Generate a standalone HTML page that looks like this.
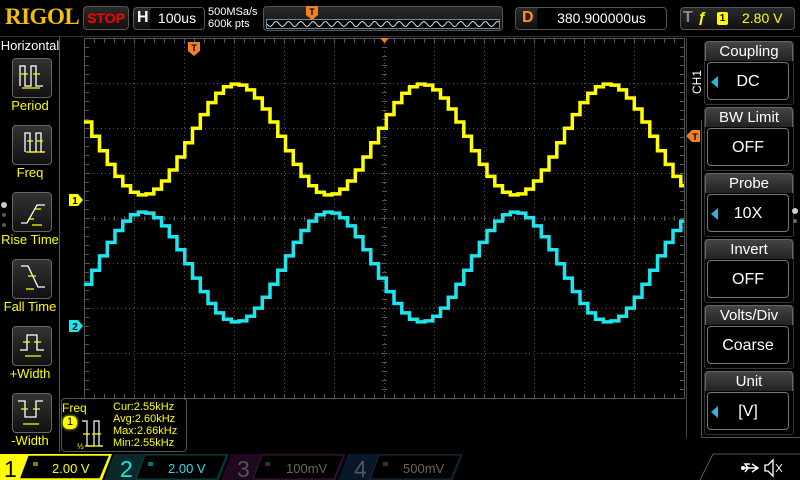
<!DOCTYPE html>
<html><head><meta charset="utf-8">
<style>
*{margin:0;padding:0;box-sizing:border-box}
body{width:800px;height:480px;background:#000;overflow:hidden;position:relative;font-family:"Liberation Sans",sans-serif;color:#fff}
.a{position:absolute}
.box{position:absolute;border:1px solid #555;border-radius:4px;background:linear-gradient(#2a2a2a,#111)}
.ll{position:absolute;left:0;width:60px;text-align:center;color:#ff0;font-size:13px}
.ib{position:absolute;left:12px;width:40px;height:40px;border:1px solid #666;border-radius:4px;background:linear-gradient(#333,#111)}
.mh{position:absolute;left:705px;width:88px;height:20px;border:1px solid #666;border-bottom:none;border-radius:4px 4px 0 0;background:linear-gradient(#444,#222);text-align:center;font-size:15px;line-height:20px}
.mb{position:absolute;left:707px;width:82px;height:38px;border:1px solid #777;border-radius:4px;background:#000;text-align:center;font-size:16px;line-height:38px}
.mw{position:absolute;left:704px;width:90px;height:64px;border:1px solid #333;border-radius:3px}
.tri{position:absolute;left:3px;top:13px;width:0;height:0;border-top:6px solid transparent;border-bottom:6px solid transparent;border-right:7px solid #29b6e0}
</style></head><body>
<!-- top bar -->
<div class="a" style="left:5px;top:4px;font-family:'Liberation Serif',serif;font-weight:bold;font-size:23px;color:#f2c200;letter-spacing:-0.5px">RIGOL</div>
<div class="box" style="left:83px;top:6px;width:46px;height:24px;color:#f00;font-weight:bold;font-size:14px;text-align:center;line-height:22px">STOP</div>
<div class="box" style="left:133px;top:7px;width:72px;height:23px"></div>
<div class="a" style="left:137px;top:9px;font-weight:bold;font-size:16px">H</div>
<div class="a" style="left:150px;top:8px;width:54px;height:21px;background:#000;border-radius:3px;font-size:14px;text-align:center;line-height:21px">100us</div>
<div class="a" style="left:208px;top:6px;font-size:11px;line-height:12px">500MSa/s<br>600k pts</div>
<div class="box" style="left:263px;top:6px;width:240px;height:25px"></div>
<svg class="a" style="left:266px;top:19px" width="234" height="10"><rect x="0.5" y="0.5" width="233" height="9" fill="#000" stroke="#6a8aa8"/><path id="mini" fill="none" stroke="#ddd" stroke-width="1"/></svg>
<svg class="a" style="left:306px;top:6px" width="12" height="14"><path d="M0 0H12V9L6 14L0 9Z" fill="#f08020"/><text x="6" y="9" font-size="9" font-weight="bold" fill="#000" text-anchor="middle" font-family="Liberation Sans">T</text></svg>
<div class="box" style="left:515px;top:7px;width:152px;height:23px"></div>
<div class="a" style="left:522px;top:9px;font-weight:bold;font-size:16px;color:#f90">D</div>
<div class="a" style="left:537px;top:8px;width:129px;height:21px;background:#000;border-radius:3px;font-size:14px;text-align:center;line-height:21px">380.900000us</div>
<div class="box" style="left:680px;top:7px;width:115px;height:23px"></div>
<div class="a" style="left:683px;top:9px;font-weight:bold;font-size:16px;color:#888">T</div>
<div class="a" style="left:698px;top:9px;font-size:15px;color:#ff0;font-weight:bold">&#x0192;</div>
<div class="a" style="left:717px;top:12px;width:11px;height:13px;background:#ff0;border-radius:2px;color:#000;font-size:10px;font-weight:bold;text-align:center;line-height:13px">1</div>
<div class="a" style="left:742px;top:10px;font-size:14px;color:#ff0">2.80 V</div>
<div class="a" style="left:0;top:36px;width:800px;height:1px;background:#333"></div>
<!-- left panel -->
<div class="a" style="left:59px;top:37px;width:1px;height:415px;background:#555"></div>
<div class="a" style="left:0;top:38px;width:60px;text-align:center;font-size:13px">Horizontal</div>
<div class="ib" style="top:58px"></div><div class="ll" style="top:98px">Period</div>
<div class="ib" style="top:125px"></div><div class="ll" style="top:165px">Freq</div>
<div class="ib" style="top:192px"></div><div class="ll" style="top:232px">Rise Time</div>
<div class="ib" style="top:259px"></div><div class="ll" style="top:299px">Fall Time</div>
<div class="ib" style="top:326px"></div><div class="ll" style="top:366px">+Width</div>
<div class="ib" style="top:393px"></div><div class="ll" style="top:433px">-Width</div>
<svg class="a" style="left:0;top:0" width="60" height="452" fill="none" stroke-width="1.3">
<g stroke="#fff"><path d="M20 86V66H25V86H31V66H36V86H43"/><path d="M25 152V133H30V152H36V133H41V152H45"/><path d="M21 223H27L37 205H45"/><path d="M21 266H28L38 287H45"/><path d="M20 350H27V335H37V350H44"/><path d="M18 401H25V417H36V401H43"/></g>
<g stroke="#ff0"><path d="M21 74H28M33 74H40M22 88H40"/><path d="M27 141H33M37 141H43M26 152H44"/><path d="M28 219H34M35 209H41M32 225H42"/><path d="M28 276H36M26 289H34"/><path d="M23 342H30M34 342H41M25 356H41"/><path d="M21 409H28M33 409H40M23 424H39"/></g>
<circle cx="4" cy="205" r="3" fill="#ccc" stroke="none"/><circle cx="4" cy="215" r="2" fill="#555" stroke="none"/><circle cx="4" cy="225" r="2" fill="#555" stroke="none"/>
</svg>
<!-- grid -->
<svg class="a" style="left:0;top:0" width="800" height="480" id="g">
<g id="grid"></g>
<path id="yw" fill="none" stroke="#ff0" stroke-width="3.5"/>
<path id="cw" fill="none" stroke="#1ee4ee" stroke-width="3.5"/>
<path d="M188 42H200V51L194 56L188 51Z" fill="#f08020"/><text x="194" y="51" font-size="9" font-weight="bold" fill="#000" text-anchor="middle" font-family="Liberation Sans">T</text>
<path d="M380 38H389L384.5 43Z" fill="#f08020"/>
<path d="M686 136L692 130H700V142H692Z" fill="#f08020"/><text x="695" y="140" font-size="9" font-weight="bold" fill="#000" text-anchor="middle" font-family="Liberation Sans">T</text>
<path d="M69 194H78L83 200L78 206H69Z" fill="#ff0"/><text x="75" y="204" font-size="10" font-weight="bold" fill="#000" text-anchor="middle" font-family="Liberation Sans">1</text>
<path d="M69 320H78L83 326L78 332H69Z" fill="#1ee4ee"/><text x="75" y="330" font-size="10" font-weight="bold" fill="#000" text-anchor="middle" font-family="Liberation Sans">2</text>
</svg>
<!-- measurement box -->
<div class="a" style="left:61px;top:398px;width:126px;height:54px;border:1px solid #555;border-radius:4px;background:#000"></div>
<div class="a" style="left:62px;top:401px;color:#ff0;font-size:12px">Freq</div>
<div class="a" style="left:63px;top:416px;width:14px;height:13px;background:#ff0;border-radius:5px;color:#000;font-size:11px;text-align:center;line-height:13px;box-shadow:0 0 3px #ff0">1</div>
<svg class="a" style="left:76px;top:416px" width="30" height="34" fill="none" stroke-width="1.2"><path d="M6 5H11V30H18V5H23V30H27" stroke="#fff"/><path d="M7 18H14M16 18H25M9 30H24" stroke="#ff0"/><text x="1" y="33" font-size="8" fill="#ff0" stroke="none" font-family="Liberation Sans">½</text></svg>
<div class="a" style="left:113px;top:401px;color:#ff0;font-size:11px;line-height:12px">Cur:2.55kHz<br>Avg:2.60kHz<br>Max:2.66kHz<br>Min:2.55kHz</div>
<!-- right panel -->
<div class="a" style="left:686px;top:38px;width:1px;height:400px;background:#444"></div>
<div class="a" style="left:701px;top:120px;width:1px;height:318px;background:#555"></div>
<div class="a" style="left:701px;top:437px;width:99px;height:1px;background:#555"></div>
<div class="a" style="font-size:12px;transform:rotate(-90deg);transform-origin:left top;top:94px;left:690px">CH1</div>
<div class="mw" style="top:41px"></div><div class="mh" style="top:41px">Coupling</div><div class="mb" style="top:62px"><span class="tri"></span>DC</div>
<div class="mw" style="top:107px"></div><div class="mh" style="top:107px">BW Limit</div><div class="mb" style="top:128px">OFF</div>
<div class="mw" style="top:173px"></div><div class="mh" style="top:173px">Probe</div><div class="mb" style="top:194px"><span class="tri"></span>10X</div>
<div class="mw" style="top:239px"></div><div class="mh" style="top:239px">Invert</div><div class="mb" style="top:260px">OFF</div>
<div class="mw" style="top:305px"></div><div class="mh" style="top:305px">Volts/Div</div><div class="mb" style="top:326px">Coarse</div>
<div class="mw" style="top:371px"></div><div class="mh" style="top:371px">Unit</div><div class="mb" style="top:392px"><span class="tri"></span>[V]</div>
<svg class="a" style="left:790px;top:205px" width="10" height="30"><circle cx="5" cy="6" r="3" fill="#ccc"/><circle cx="5" cy="16" r="2" fill="#666"/></svg>
<!-- bottom bar -->
<svg class="a" style="left:0;top:452px" width="800" height="28">
<path d="M0 2H112L102 28H0Z" fill="#ff0"/>
<path d="M28 3H110L100 27H19Z" fill="#000" stroke="#ff0" stroke-width="1.5"/>
<path d="M114 2H229L219 28H104Z" fill="#0a2a2a"/><path d="M145 3H227L217 27H136Z" fill="#000" stroke="#0d4444"/>
<path d="M231 2H346L336 28H221Z" fill="#200820"/><path d="M262 3H344L334 27H253Z" fill="#000" stroke="#3a1a3a"/>
<path d="M348 2H463L453 28H338Z" fill="#081828"/><path d="M379 3H461L451 27H370Z" fill="#000" stroke="#1a2a3a"/>
<g font-family="Liberation Sans">
<text x="4" y="25" font-size="23" fill="#000">1</text>
<text x="52" y="21" font-size="13" fill="#ff0">2.00 V</text>
<text x="120" y="25" font-size="23" fill="#1ee4ee">2</text>
<text x="168" y="21" font-size="13" fill="#1ee4ee">2.00 V</text>
<text x="237" y="25" font-size="23" fill="#555">3</text>
<text x="286" y="21" font-size="13" fill="#666">100mV</text>
<text x="354" y="25" font-size="23" fill="#555">4</text>
<text x="403" y="21" font-size="13" fill="#666">500mV</text>
</g>
<g stroke-width="1"><path d="M33 11H38M33 13H38" stroke="#ff0"/><path d="M148 11H153M148 13H153" stroke="#1ee4ee"/><path d="M265 11H270M265 13H270" stroke="#666"/><path d="M383 11H388M383 13H388" stroke="#666"/></g>
<path d="M713 2H800M713 2L700 28" stroke="#555" fill="none"/>
<path d="M742 16H758M752 12L758 16L752 20M748 16L745 12H750M748 16L745 20" stroke="#fff" stroke-width="1.5" fill="none"/><circle cx="743" cy="16" r="2" fill="#fff"/>
<path d="M765 13H768L773 8V24L768 19H765Z" stroke="#fff" fill="none" stroke-width="1.3"/><path d="M776 12L782 20M782 12L776 20" stroke="#fff"/>
</svg>
<script>
(function(){
var ns="http://www.w3.org/2000/svg",g=document.getElementById("grid");
function add(tag,at){var e=document.createElementNS(ns,tag);for(var k in at)e.setAttribute(k,at[k]);g.appendChild(e);}
add("rect",{x:84.5,y:38.5,width:600,height:360,fill:"none",stroke:"#555"});
for(var i=1;i<12;i++){var x=84+i*50+.5;add("line",{x1:x,y1:39,x2:x,y2:398,stroke:"#555","stroke-dasharray":"1 3"});}
for(var j=1;j<8;j++){var y=38+j*45+.5;add("line",{x1:85,y1:y,x2:684,y2:y,stroke:"#555","stroke-dasharray":"1 3"});}
var d="";
for(var x=84;x<=684;x+=10){d+="M"+(x+.5)+" 39v4M"+(x+.5)+" 398v-4";}
for(var y=38;y<=398;y+=9){d+="M85 "+(y+.5)+"h4M684 "+(y+.5)+"h-4";}
for(var x=84;x<=684;x+=10)d+="M"+(x+.5)+" 216v5";
for(var y=38;y<=398;y+=9)d+="M382 "+(y+.5)+"h5";
add("path",{d:d,stroke:"#555",fill:"none"});
function wave(f){var p="",st=7.75;for(var x=84;x<=684;x+=st){var y=f(x);p+=(p?"V":"M"+x+" ")+y.toFixed(1)+"H"+Math.min(684,x+st).toFixed(1);}return p;}
var T=186;
document.getElementById("yw").setAttribute("d",wave(function(x){return 139.5+55.5*Math.cos(2*Math.PI*(x-140)/T);}));
document.getElementById("cw").setAttribute("d",wave(function(x){return 267-55*Math.cos(2*Math.PI*(x-140)/T);}));
var m="";for(var x=0;x<=232;x++){m+=(x?"L":"M")+(x+1)+" "+(5+2.5*Math.sin(x/12.3*2*Math.PI)).toFixed(1);}
document.getElementById("mini").setAttribute("d",m);
})();
</script>
</body></html>
